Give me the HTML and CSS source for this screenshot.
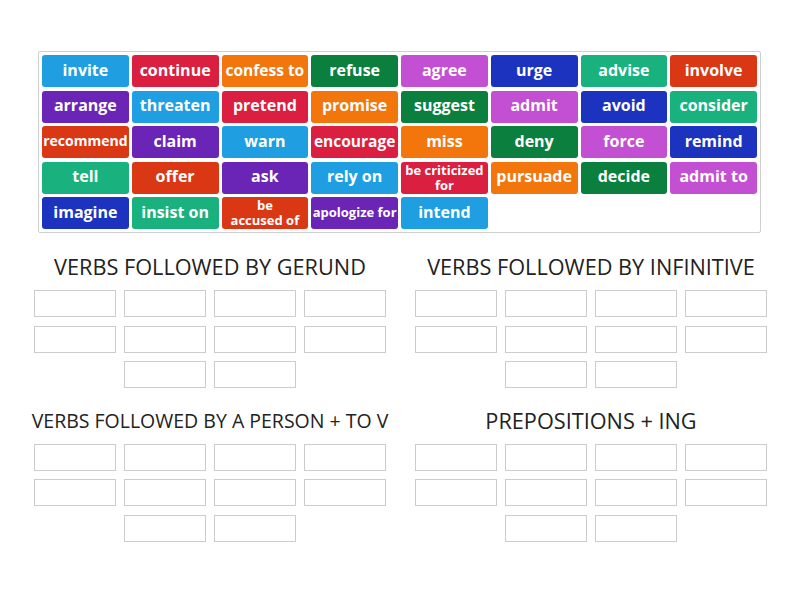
FILE: index.html
```html
<!DOCTYPE html>
<html lang="en">
<head>
<meta charset="utf-8">
<title>Group sort</title>
<link rel="stylesheet" href="styles.css">
</head>
<body>
<div class="page">
  <div class="bank">
    <div class="tile c-lblue">invite</div>
    <div class="tile c-red">continue</div>
    <div class="tile c-orange fit-16">confess to</div>
    <div class="tile c-green">refuse</div>
    <div class="tile c-magenta">agree</div>
    <div class="tile c-dblue">urge</div>
    <div class="tile c-teal">advise</div>
    <div class="tile c-rorange">involve</div>

    <div class="tile c-purple">arrange</div>
    <div class="tile c-lblue">threaten</div>
    <div class="tile c-red">pretend</div>
    <div class="tile c-orange">promise</div>
    <div class="tile c-green">suggest</div>
    <div class="tile c-magenta">admit</div>
    <div class="tile c-dblue">avoid</div>
    <div class="tile c-teal">consider</div>

    <div class="tile c-rorange fit-14">recommend</div>
    <div class="tile c-purple">claim</div>
    <div class="tile c-lblue">warn</div>
    <div class="tile c-red fit-15">encourage</div>
    <div class="tile c-orange">miss</div>
    <div class="tile c-green">deny</div>
    <div class="tile c-magenta">force</div>
    <div class="tile c-dblue">remind</div>

    <div class="tile c-teal">tell</div>
    <div class="tile c-rorange">offer</div>
    <div class="tile c-purple">ask</div>
    <div class="tile c-lblue">rely on</div>
    <div class="tile c-red two-line">be criticized for</div>
    <div class="tile c-orange">pursuade</div>
    <div class="tile c-green">decide</div>
    <div class="tile c-magenta">admit to</div>

    <div class="tile c-dblue">imagine</div>
    <div class="tile c-teal">insist on</div>
    <div class="tile c-rorange two-line narrow">be accused&nbsp;of</div>
    <div class="tile c-purple fit-13">apologize for</div>
    <div class="tile c-lblue">intend</div>
  </div>

  <div class="groups">
    <section class="group">
      <h2 class="group-title">VERBS FOLLOWED BY GERUND</h2>
      <div class="slots">
        <div class="slot"></div><div class="slot"></div><div class="slot"></div><div class="slot"></div>
        <div class="slot"></div><div class="slot"></div><div class="slot"></div><div class="slot"></div>
        <div class="slot"></div><div class="slot"></div>
      </div>
    </section>
    <section class="group">
      <h2 class="group-title">VERBS FOLLOWED BY INFINITIVE</h2>
      <div class="slots">
        <div class="slot"></div><div class="slot"></div><div class="slot"></div><div class="slot"></div>
        <div class="slot"></div><div class="slot"></div><div class="slot"></div><div class="slot"></div>
        <div class="slot"></div><div class="slot"></div>
      </div>
    </section>
    <section class="group">
      <h2 class="group-title small">VERBS FOLLOWED BY A PERSON + TO V</h2>
      <div class="slots">
        <div class="slot"></div><div class="slot"></div><div class="slot"></div><div class="slot"></div>
        <div class="slot"></div><div class="slot"></div><div class="slot"></div><div class="slot"></div>
        <div class="slot"></div><div class="slot"></div>
      </div>
    </section>
    <section class="group">
      <h2 class="group-title">PREPOSITIONS + ING</h2>
      <div class="slots">
        <div class="slot"></div><div class="slot"></div><div class="slot"></div><div class="slot"></div>
        <div class="slot"></div><div class="slot"></div><div class="slot"></div><div class="slot"></div>
        <div class="slot"></div><div class="slot"></div>
      </div>
    </section>
  </div>
</div>
</body>
</html>
```

FILE: styles.css
```css
* { box-sizing: border-box; }

html, body {
  margin: 0;
  padding: 0;
  background: #ffffff;
}

body {
  font-family: "Open Sans", "Liberation Sans", sans-serif;
  color: #222222;
}

.page {
  width: 800px;
  height: 600px;
  padding-top: 51px;
}

.bank {
  width: 723px;
  margin-left: 38px;
  border: 1px solid #cfcfcf;
  border-radius: 2px;
  padding: 3px;
  display: grid;
  grid-template-columns: repeat(8, 1fr);
  grid-auto-rows: 32px;
  column-gap: 3px;
  row-gap: 3.5px;
}

.tile {
  display: flex;
  align-items: center;
  justify-content: center;
  text-align: center;
  border-radius: 3px;
  color: #ffffff;
  font-weight: 700;
  font-size: 16px;
  line-height: 1.2;
  white-space: nowrap;
  letter-spacing: 0;
  padding-bottom: 1px;
}

.fit-16 { font-size: 15.5px; }
.fit-15 { font-size: 15.5px; }
.fit-14 { font-size: 14px; }
.fit-13 { font-size: 13px; }

.two-line {
  font-size: 13px;
  line-height: 15px;
  white-space: normal;
  padding: 0 2px;
}

.two-line.narrow {
  padding: 0 6px;
}

.c-lblue   { background: #1f9fe2; }
.c-red     { background: #da1f40; }
.c-orange  { background: #f3760c; }
.c-green   { background: #0b7f3e; }
.c-magenta { background: #c34fd2; }
.c-dblue   { background: #1b33bf; }
.c-teal    { background: #19b27e; }
.c-rorange { background: #da3715; }
.c-purple  { background: #6a24b6; }

.groups {
  margin-top: 20px;
  margin-left: 34px;
  display: grid;
  grid-template-columns: 352px 352px;
  column-gap: 29px;
  row-gap: 18.5px;
}

.group-title {
  margin: 0 0 9px 0;
  height: 28px;
  line-height: 28px;
  display: flex;
  justify-content: center;
  font-weight: 400;
  font-size: 21.7px;
  color: #222222;
  white-space: nowrap;
}

.group-title.small {
  font-size: 19.5px;
}

.slots {
  display: flex;
  flex-wrap: wrap;
  justify-content: center;
  column-gap: 8px;
  row-gap: 8.5px;
}

.slot {
  width: 82px;
  height: 27px;
  border: 1px solid #cccccc;
  background: #ffffff;
}
```
